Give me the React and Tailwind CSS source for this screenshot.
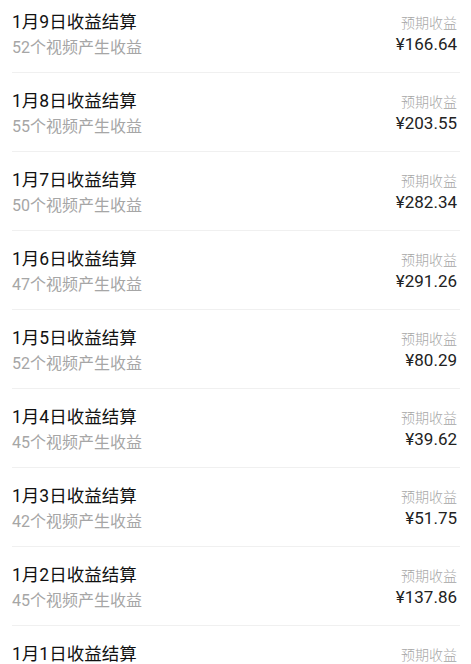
const rows = [
    { day: 9, count: 52, amount: "166.64" },
    { day: 8, count: 55, amount: "203.55" },
    { day: 7, count: 50, amount: "282.34" },
    { day: 6, count: 47, amount: "291.26" },
    { day: 5, count: 52, amount: "80.29" },
    { day: 4, count: 45, amount: "39.62" },
    { day: 3, count: 42, amount: "51.75" },
    { day: 2, count: 45, amount: "137.86" },
    { day: 1, count: 48, amount: "96.12" },
];

export default function App() {
    return (
        <div
            className="h-[664px] w-[471px] overflow-hidden bg-white"
            style={{ fontFamily: 'Roboto, "Noto Sans CJK SC", sans-serif' }}
        >
            <div className="-mt-[6px] pl-[12px] pr-[11px]">
                {rows.map((r) => (
                    <div key={r.day} className="flex h-[79px] justify-between border-b border-[#f0f0f0]">
                        <div className="pt-[15px]">
                            <div className="text-[17.5px] leading-[26px] text-[#111]">
                                1月{r.day}日收益结算
                            </div>
                            <div className="text-[16px] leading-[26px] text-[#a6a6a6]">
                                {r.count}个视频产生收益
                            </div>
                        </div>
                        <div className="flex flex-col items-end pt-[19px] pr-[3px]">
                            <div className="text-[14px] leading-[20px] font-light text-[#a6a6a6]">预期收益</div>
                            <div className="text-[17px] leading-[22px] text-[#222]">¥{r.amount}</div>
                        </div>
                    </div>
                ))}
            </div>
        </div>
    );
}
